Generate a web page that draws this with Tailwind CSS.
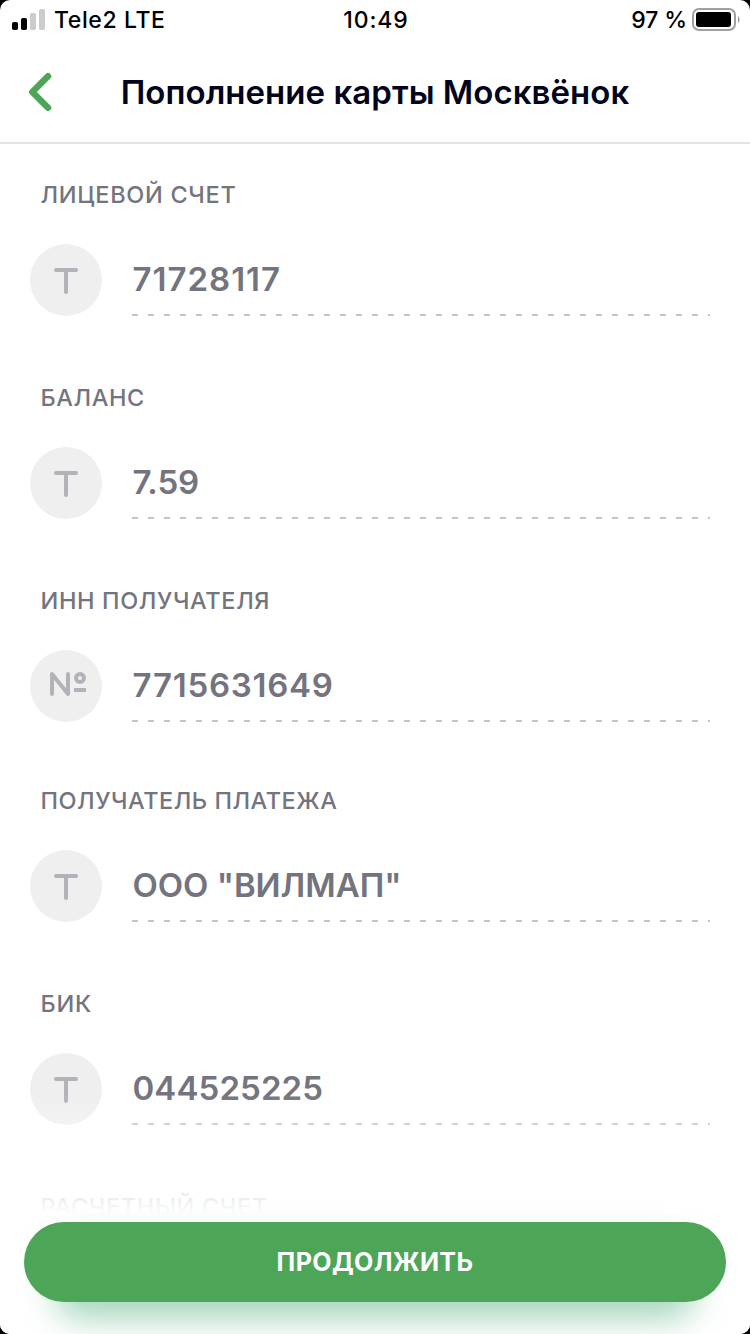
<!DOCTYPE html>
<html lang="ru">

<head>
  <meta charset="UTF-8">
  <meta name="viewport" content="width=device-width, initial-scale=1.0">
  <title>Пополнение карты Москвёнок</title>
  <script src="https://cdn.jsdelivr.net/npm/@tailwindcss/browser@4"></script>
</head>

<body class="bg-black font-['Inter','Liberation_Sans',sans-serif]">
  <div class="relative flex flex-col w-[750px] h-[1334px] bg-white rounded-[10px] overflow-hidden">
    <!-- Status bar -->
    <div class="grid grid-cols-3 items-center h-10 pl-3 pr-2.5 text-[23px] leading-7 text-black font-medium">
      <div class="flex items-center gap-[9px]">
        <svg class="w-[33px] h-[22px]" viewBox="0 0 33 22">
          <rect x="0" y="13" width="6" height="8" rx="1.8" fill="#000" />
          <rect x="9" y="9" width="6" height="12" rx="1.8" fill="#000" />
          <rect x="18" y="4" width="6" height="17" rx="1.8" fill="#ccc" />
          <rect x="27" y="0" width="6" height="21" rx="1.8" fill="#ccc" />
        </svg>
        <span class="whitespace-nowrap tracking-[0.6px]">Tele2 LTE</span>
      </div>
      <div class="text-center tracking-[0.9px]">10:49</div>
      <div class="flex items-center justify-end gap-[5px]">
        <span class="whitespace-nowrap tracking-[-0.1px]">97 %</span>
        <svg class="w-12 h-6" viewBox="0 0 48 24">
          <rect x="1" y="1" width="42" height="21" rx="6" fill="none" stroke="#a0a0a0" stroke-width="2" />
          <rect x="4" y="4" width="35" height="15" rx="3" fill="#000" />
          <path d="M46 8v7c1-.6 1.600-2 1.600-3.500S47 8.600 46 8z" fill="#a0a0a0" />
        </svg>
      </div>
    </div>

    <!-- Header -->
    <header class="relative flex items-center justify-center h-[104px] pt-0.5 border-b-2 border-[#e4e4e4]">
      <svg class="absolute left-7 top-8 w-6 h-10" viewBox="0 0 24 40" fill="none" stroke="#4da657" stroke-width="6.500"
        stroke-linecap="round" stroke-linejoin="round">
        <path d="M20 4.300L4.300 20L20 35.700" />
      </svg>
      <h1 class="text-[33px] leading-10 font-semibold tracking-[0.04px] text-[#02041d] whitespace-nowrap">Пополнение карты Москвёнок</h1>
    </header>

    <!-- Payment details -->
    <main class="flex flex-col pt-[37px] text-[#74747e]">
      <section class="mb-[68px]">
        <h2 class="pl-[40.5px] mb-9 text-[23.5px] leading-[27px] font-medium tracking-[0.7px]">ЛИЦЕВОЙ СЧЕТ</h2>
        <div class="flex gap-[30px] pl-[30px] pr-10 h-[72px]">
          <div class="flex items-center justify-center size-[72px] rounded-full bg-[#efefef]">
            <svg class="size-10" viewBox="0 0 40 40" fill="none" stroke="#b2b2b9" stroke-width="4" stroke-linecap="round">
              <path d="M10 10H30M20 10V32" />
            </svg>
          </div>
          <div class="flex flex-col justify-between flex-1">
            <p class="pl-[0.5px] text-[33px] leading-[70px] font-semibold tracking-[1px]">71728117</p>
            <div class="h-0.5 bg-[repeating-linear-gradient(90deg,#c2c2c8_0_6px,transparent_6px_16px)]"></div>
          </div>
        </div>
      </section>

      <section class="mb-[68px]">
        <h2 class="pl-[40.5px] mb-9 text-[23.5px] leading-[27px] font-medium tracking-[0.6px]">БАЛАНС</h2>
        <div class="flex gap-[30px] pl-[30px] pr-10 h-[72px]">
          <div class="flex items-center justify-center size-[72px] rounded-full bg-[#efefef]">
            <svg class="size-10" viewBox="0 0 40 40" fill="none" stroke="#b2b2b9" stroke-width="4" stroke-linecap="round">
              <path d="M10 10H30M20 10V32" />
            </svg>
          </div>
          <div class="flex flex-col justify-between flex-1">
            <p class="pl-[0.5px] text-[33px] leading-[70px] font-semibold tracking-[-0.1px]">7.59</p>
            <div class="h-0.5 bg-[repeating-linear-gradient(90deg,#c2c2c8_0_6px,transparent_6px_16px)]"></div>
          </div>
        </div>
      </section>

      <section class="mb-[65px]">
        <h2 class="pl-[40.5px] mb-9 text-[23.5px] leading-[27px] font-medium tracking-[0.63px]">ИНН ПОЛУЧАТЕЛЯ</h2>
        <div class="flex gap-[30px] pl-[30px] pr-10 h-[72px]">
          <div class="flex items-center justify-center size-[72px] rounded-full bg-[#efefef]">
            <svg class="size-10" viewBox="0 0 40 40" fill="none" stroke="#b2b2b9" stroke-width="4" stroke-linecap="round" stroke-linejoin="round">
              <path d="M6 28V8L22 28V8" />
              <circle cx="34" cy="12" r="4" />
              <path d="M28 24H40" stroke-linecap="butt" />
            </svg>
          </div>
          <div class="flex flex-col justify-between flex-1">
            <p class="pl-[0.5px] text-[33px] leading-[70px] font-semibold tracking-[0.75px]">7715631649</p>
            <div class="h-0.5 bg-[repeating-linear-gradient(90deg,#c2c2c8_0_6px,transparent_6px_16px)]"></div>
          </div>
        </div>
      </section>

      <section class="mb-[68px]">
        <h2 class="pl-[40.5px] mb-9 text-[23.5px] leading-[27px] font-medium tracking-[0.52px]">ПОЛУЧАТЕЛЬ ПЛАТЕЖА</h2>
        <div class="flex gap-[30px] pl-[30px] pr-10 h-[72px]">
          <div class="flex items-center justify-center size-[72px] rounded-full bg-[#efefef]">
            <svg class="size-10" viewBox="0 0 40 40" fill="none" stroke="#b2b2b9" stroke-width="4" stroke-linecap="round">
              <path d="M10 10H30M20 10V32" />
            </svg>
          </div>
          <div class="flex flex-col justify-between flex-1">
            <p class="pl-[0.5px] text-[33px] leading-[70px] font-semibold tracking-[-0.05px]">ООО "ВИЛМАП"</p>
            <div class="h-0.5 bg-[repeating-linear-gradient(90deg,#c2c2c8_0_6px,transparent_6px_16px)]"></div>
          </div>
        </div>
      </section>

      <section class="mb-[68px]">
        <h2 class="pl-[40.5px] mb-9 text-[23.5px] leading-[27px] font-medium tracking-[0.8px]">БИК</h2>
        <div class="flex gap-[30px] pl-[30px] pr-10 h-[72px]">
          <div class="flex items-center justify-center size-[72px] rounded-full bg-[#efefef]">
            <svg class="size-10" viewBox="0 0 40 40" fill="none" stroke="#b2b2b9" stroke-width="4" stroke-linecap="round">
              <path d="M10 10H30M20 10V32" />
            </svg>
          </div>
          <div class="flex flex-col justify-between flex-1">
            <p class="pl-[0.5px] text-[33px] leading-[70px] font-semibold tracking-[0.1px]">044525225</p>
            <div class="h-0.5 bg-[repeating-linear-gradient(90deg,#c2c2c8_0_6px,transparent_6px_16px)]"></div>
          </div>
        </div>
      </section>

      <section>
        <h2 class="pl-[40.5px] text-[23.5px] leading-[27px] font-medium tracking-[0.65px]">РАСЧЕТНЫЙ СЧЕТ</h2>
      </section>
    </main>

    <!-- Button over the faded end of the list -->
    <div class="absolute inset-x-0 bottom-0">
      <div class="h-[120px] bg-linear-to-b from-white/0 to-white"></div>
      <div class="relative h-[120px] px-6 pt-2 bg-white">
        <div class="absolute inset-x-14 top-7 bottom-4 rounded-[24px] bg-[#3ca56f]/48 blur-[17px]"></div>
        <button class="relative w-full h-20 pt-px rounded-full bg-[#4da657] text-white text-[25px] font-bold tracking-[0.4px]">ПРОДОЛЖИТЬ</button>
      </div>
    </div>
  </div>
</body>

</html>
